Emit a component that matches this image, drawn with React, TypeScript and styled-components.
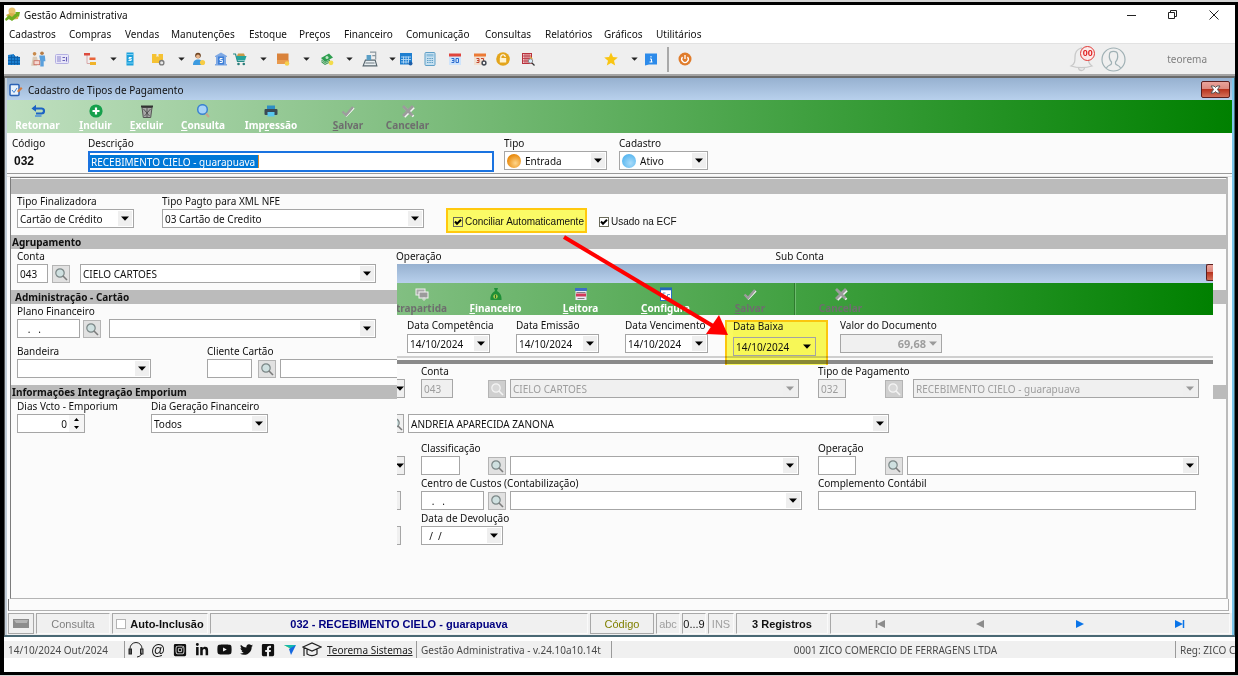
import React, { useId } from 'react';
import styled, { createGlobalStyle, css } from 'styled-components';
import { FaFacebookSquare, FaInstagramSquare, FaLinkedinIn, FaTwitter, FaYoutube } from 'react-icons/fa';

const Global = createGlobalStyle`
  * { box-sizing: border-box; }
  body { margin: 0; background: #d4d4d4; }
  body, button, input, select {
    font-family: 'Noto Sans', 'Open Sans', sans-serif;
    font-size: 10px;
    line-height: 14px;
    color: #111;
  }
  button { padding: 0; border: 0; background: none; }
`;

/* ---------- application frame ---------- */

const Frame = styled.div`
  display: flex;
  flex-direction: column;
  min-height: calc(100vh - 3px);
  margin: 2px 0 1px;
  border: 3px solid #000;
  border-left-width: 4px;
  background: #fff;
  overflow: hidden;
`;

const TitleBar = styled.header`
  display: flex;
  align-items: center;
  height: 20px;
  padding-left: 1px;
  gap: 4px;
`;

const WindowButtons = styled.div`
  display: flex;
  margin-left: auto;
  padding-right: 1px;
`;

const WindowButton = styled.button`
  display: grid;
  place-items: center;
  width: 41px;
  height: 18px;
`;

const MenuBar = styled.nav`
  display: flex;
  align-items: center;
  height: 18px;
  padding-left: 5px;
`;

const MenuItem = styled.button<{ $w: number }>`
  width: ${(p) => p.$w}px;
  text-align: left;
  white-space: nowrap;
`;

const ToolBar = styled.div`
  display: flex;
  align-items: center;
  height: 31px;
  border-top: 1px solid #e2e2e2;
  background: #efefef;
`;

const ToolButton = styled.button<{ $gap: number; $arrow?: boolean }>`
  display: grid;
  place-items: center;
  width: ${(p) => (p.$arrow ? 8 : 16)}px;
  height: 20px;
  margin-left: ${(p) => p.$gap}px;
`;

const ToolSeparator = styled.span`
  width: 2px;
  height: 25px;
  margin-left: 8px;
  background: #a9a9a9;
`;

const UserArea = styled.div`
  display: flex;
  align-items: center;
  gap: 6px;
  margin-left: auto;
  padding-right: 28px;
  color: #808080;
`;

const Bell = styled.button`
  position: relative;
  width: 26px;
  height: 28px;
`;

const BellBadge = styled.span`
  position: absolute;
  top: 1px;
  right: 0;
  width: 15px;
  height: 15px;
  border: 1px solid #e03a36;
  border-radius: 50%;
  background: #fbeaea;
  color: #e02020;
  font: bold 9px/13px 'Liberation Sans', sans-serif;
  text-align: center;
`;

const UserName = styled.span`
  margin-left: 35px;
  font-size: 10px;
`;

/* ---------- document window ---------- */

const Child = styled.section`
  display: flex;
  flex: 1;
  flex-direction: column;
  border: solid #4a6874;
  border-width: 2px 1px 2px;
  border-top-color: #6a6a6a;
  border-left-color: #555;
  background: #fbfbfb;
`;

const ToolBarEdge = styled.div`
  height: 2px;
  background: #a3a3a3;
`;

const ChildBody = styled.div`
  display: flex;
  flex: 1;
  flex-direction: column;
  border: solid #c4cfd9;
  border-width: 0 2px;
  border-right-color: #7cc6ea;
`;

const ChildTitle = styled.header`
  display: flex;
  align-items: center;
  height: 22px;
  padding: 1px 2px 0 2px;
  gap: 5px;
  background: linear-gradient(#97b1d0, #b8d0ec);
`;

const ChildTitleText = styled.h1`
  flex: 1;
  margin: 0;
  font-size: 10px;
  font-weight: 400;
`;

const CloseButton = styled.button`
  display: grid;
  place-items: center;
  width: 29px;
  height: 17px;
  border: 1px solid #5b1f1f;
  border-radius: 2px;
  background: linear-gradient(#e9a39b, #dd8a80 45%, #b8341f 50%, #d4705a);
`;

const CommandBar = styled.div`
  display: flex;
  height: 33px;
  padding: 4px 0 0 7px;
  gap: 18px;
  background: linear-gradient(90deg, #c0dfc0, #82bf82 32%, #40a040 65%, #008000);
`;

const Command = styled.button<{ $w: number; $off?: boolean; $lead?: number }>`
  display: flex;
  flex-direction: column;
  align-items: center;
  width: ${(p) => p.$w}px;
  margin-left: ${(p) => p.$lead ?? 0}px;
  white-space: nowrap;
  font-size: 10px;
  line-height: 14px;
  font-weight: 700;
  color: ${(p) => (p.$off ? '#6e6e6e' : '#fff')};
  svg { flex: none; }
`;

const HeaderForm = styled.div`
  display: flex;
  height: 40px;
  padding: 3px 0 0 5px;
`;

const DoubleRule = styled.div`
  height: 4px;
  border-top: 1px solid #9a9a9a;
  border-bottom: 1px solid #e4e4e4;
`;

const Panel = styled.div`
  position: relative;
  display: flex;
  flex: 1;
  flex-direction: column;
  margin: 0 4px 0 3px;
  border: 1px solid #7c7c7c;
  border-right: 2px solid #bbb;
  border-bottom-color: #b4b4b4;
`;

const SectionBar = styled.h2<{ $indent?: boolean }>`
  height: 14px;
  margin: 0;
  padding-left: ${(p) => (p.$indent ? 4 : 1)}px;
  background: #bbb;
  font-size: 10px;
  line-height: 14px;
  font-weight: 700;
`;

const TopBand = styled.div`
  height: 15px;
  margin-top: 1px;
  background: #bbb;
`;

const FormRow = styled.div<{ $h: number }>`
  display: flex;
  align-items: flex-start;
  height: ${(p) => p.$h}px;
  padding-left: 6px;
`;

/* ---------- fields ---------- */

const FieldBox = styled.div<{ $gap?: number; $w?: number }>`
  display: flex;
  flex-direction: column;
  flex: none;
  width: ${(p) => (p.$w ? p.$w + 'px' : 'auto')};
  margin-left: ${(p) => p.$gap ?? 0}px;
`;

const Label = styled.label`
  height: 15px;
  line-height: 14px;
  white-space: nowrap;
`;

const Controls = styled.div`
  display: flex;
  align-items: center;
`;

const boxed = css<{ $off?: boolean }>`
  height: 19px;
  border: 1px solid #a6a6a6;
  background: ${(p) => (p.$off ? '#f0f0f0' : '#fff')};
  color: ${(p) => (p.$off ? '#9d9d9d' : '#111')};
  border-radius: 0;
  outline: 0;
`;

const Input = styled.input<{ $w: number; $off?: boolean }>`
  ${boxed}
  flex: none;
  width: ${(p) => p.$w}px;
  padding: 0 2px;
`;

const FocusInput = styled.div`
  width: 406px;
  height: 21px;
  padding: 2px 0;
  border: 2px solid #1a73e0;
  background: #fff;
`;

const SelectedInput = styled.input`
  display: block;
  width: 169px;
  height: 13px;
  padding: 0 1px;
  border: 0;
  border-right: 1px solid #e08a2a;
  outline: 0;
  background: #0078d7;
  color: #fff;
`;

const Combo = styled.div<{ $w: number; $off?: boolean; $gap?: number }>`
  ${boxed}
  display: flex;
  align-items: center;
  flex: none;
  width: ${(p) => p.$w}px;
  margin-left: ${(p) => p.$gap ?? 0}px;
`;

const NativeSelect = styled.select<{ $off?: boolean; $bold?: boolean; $pad?: number }>`
  flex: 1;
  min-width: 0;
  height: 17px;
  padding: 0 0 0 ${(p) => p.$pad ?? 2}px;
  appearance: none;
  border: 0;
  border-radius: 0;
  outline: 0;
  background: transparent;
  color: ${(p) => (p.$off ? '#9d9d9d' : '#111')};
  opacity: 1;
  font-size: ${(p) => (p.$bold ? 11 : 10)}px;
  font-weight: ${(p) => (p.$bold ? 700 : 400)};
  text-align-last: ${(p) => (p.$bold ? 'right' : 'left')};
`;

const ArrowCell = styled.span`
  display: grid;
  place-items: center;
  flex: none;
  width: 14px;
  height: 15px;
  margin-right: 1px;
  background: #efefef;
`;

const Lookup = styled.button<{ $gap?: number; $off?: boolean }>`
  display: grid;
  place-items: center;
  flex: none;
  width: 18px;
  height: 18px;
  margin-left: ${(p) => p.$gap ?? 4}px;
  border: 1px solid #b4b4b4;
  background: ${(p) => (p.$off ? '#cfcfcf' : '#e1e1e1')};
`;

const CodeValue = styled.output`
  padding: 3px 0 0 2px;
  font: bold 12px/14px 'Liberation Sans', sans-serif;
`;

const Dot = styled.span<{ $c: string; $hi: string }>`
  flex: none;
  width: 14px;
  height: 14px;
  margin-left: 2px;
  border-radius: 50%;
  background: radial-gradient(circle at 60% 65%, ${(p) => p.$hi}, ${(p) => p.$c} 70%);
`;

const CheckLabel = styled.label<{ $hl?: boolean }>`
  display: flex;
  align-items: center;
  gap: 2px;
  height: 25px;
  margin-top: 14px;
  padding: 3px 2px 0 5px;
  border: 2px solid ${(p) => (p.$hl ? '#ffc90e' : 'transparent')};
  background: ${(p) => (p.$hl ? '#fbfb66' : 'transparent')};
  font: 10px/12px 'Liberation Sans', sans-serif;
  white-space: nowrap;
`;

const CheckCell = styled.span`
  display: grid;
  flex: none;
  > * { grid-area: 1 / 1; }
  svg { pointer-events: none; opacity: 0; }
  input:checked + svg { opacity: 1; }
`;

const CheckInput = styled.input<{ $hl?: boolean; $pale?: boolean }>`
  appearance: none;
  width: 10px;
  height: 10px;
  margin: 0;
  border: 1px solid ${(p) => (p.$pale ? '#b4b4b4' : '#6a6a5a')};
  background: ${(p) => (p.$hl ? '#fbfb66' : '#fff')};
`;

const Spinner = styled.div`
  ${boxed}
  display: flex;
  width: 68px;
`;

const SpinInput = styled.input`
  flex: 1;
  min-width: 0;
  padding: 0 2px 0 0;
  border: 0;
  outline: 0;
  background: transparent;
  text-align: right;
`;

const SpinKeys = styled.span`
  display: flex;
  flex-direction: column;
  width: 15px;
  background: #f5f5f5;
  button { display: grid; place-items: center; flex: 1; height: 8px; line-height: 0; }
`;

/* ---------- second window lying over the first ---------- */

const Overlay = styled.section`
  position: absolute;
  top: 86px;
  left: 386px;
  right: 13px;
  height: 290px;
  overflow: hidden;
  background: #fbfbfb;
`;

const OverlayTitle = styled.header`
  display: flex;
  justify-content: flex-end;
  height: 19px;
  background: linear-gradient(#97b1d0, #b8d0ec);
`;

const OverlayClose = styled.button`
  width: 7px;
  height: 17px;
  border: 1px solid #5b1f1f;
  border-right: 0;
  border-radius: 2px 0 0 2px;
  background: linear-gradient(#e9a39b, #dd8a80 45%, #b8341f 50%, #d4705a);
`;

const OverlayCommands = styled(CommandBar)`
  height: 32px;
  padding-left: 0;
  gap: 0;
  background: linear-gradient(90deg, #82bf82, #40a040 50%, #008000);
`;

const BarDivider = styled.span`
  width: 2px;
  height: 32px;
  margin: -4px 0 0 27px;
  background: #2f7a2f;
  border-right: 1px solid #6dbb6d;
`;

const DateRow = styled.div`
  display: flex;
  height: 49px;
  padding: 3px 0 0 10px;
  border-bottom: 4px solid #8a8a8a;
  box-shadow: inset 0 -2px 0 #fbfbfb, inset 0 -4px 0 #cfcfcf;
  label { height: 16px; }
`;

const Highlight = styled.div`
  flex: none;
  width: 103px;
  height: 45px;
  margin-left: 17px;
  margin-top: 2px;
  padding-left: 6px;
  border: 2px solid #ffc90e;
  border-bottom: 0;
  background: #fdfd60;
  mix-blend-mode: multiply;
  label { height: 15px; line-height: 8px; }
  select, div, span { background-color: #fbfb58; }
`;

const Grid = styled.div`
  display: grid;
  grid-template-columns: 24px 397px 1fr;
  grid-template-rows: 36px 35px 42px 35px 35px;
`;

const GridCell = styled.div<{ $from?: number; $end?: number }>`
  grid-column: ${(p) => p.$from ?? 'auto'} / ${(p) => p.$end ?? 'auto'};
  align-self: end;
  padding-bottom: 2px;
  min-width: 0;
`;

const Stub = styled.span<{ $w: number }>`
  display: flex;
  align-items: center;
  justify-content: flex-end;
  width: ${(p) => p.$w}px;
  height: 19px;
  border: 1px solid #a6a6a6;
  border-left: 0;
  background: #f0f0f0;
  overflow: hidden;
  svg { flex: none; }
`;

const Pointer = styled.svg`
  position: absolute;
  top: 57px;
  left: 550px;
  pointer-events: none;
`;

/* ---------- bottom bars ---------- */

const LowerStrip = styled.div`
  height: 12px;
  margin: 0 3px 2px 1px;
  border: 1px solid #b0b0b0;
  border-top: 0;
  border-left-color: #777;
`;

const RecordBar = styled.footer`
  display: flex;
  gap: 2px;
  height: 22px;
  padding: 0 2px 1px 1px;
  background: #f0f0f0;
  font-family: 'Liberation Sans', sans-serif;
`;

const RecordCell = styled.div<{ $w?: number; $c?: string; $b?: boolean; $raised?: boolean }>`
  display: flex;
  align-items: center;
  justify-content: center;
  flex: ${(p) => (p.$w ? `0 0 ${p.$w}px` : '1')};
  border: 1px solid #a8a8a8;
  border-right-color: ${(p) => (p.$raised ? '#a8a8a8' : '#fafafa')};
  border-bottom-color: ${(p) => (p.$raised ? '#a8a8a8' : '#fafafa')};
  color: ${(p) => p.$c ?? '#111'};
  font: ${(p) => (p.$b ? 'bold 11px' : '11px')}/14px 'Liberation Sans', sans-serif;
  white-space: nowrap;
`;

const NavButton = styled.button`
  display: grid;
  place-items: center;
  flex: 1;
`;

const AutoLabel = styled.label`
  display: flex;
  align-items: center;
  gap: 4px;
  font: bold 11px/14px 'Liberation Sans', sans-serif;
`;

const AppStatus = styled.footer`
  display: flex;
  align-items: stretch;
  height: 17px;
  margin: 4px 0 14px;
  background: #f0f0f0;
  color: #4a4a4a;
`;

const StatusCell = styled.div<{ $w?: number; $flush?: boolean }>`
  display: flex;
  align-items: center;
  justify-content: ${(p) => (p.$w ? 'flex-start' : 'center')};
  flex: ${(p) => (p.$w ? `0 0 ${p.$w}px` : '1')};
  padding-left: ${(p) => (p.$flush ? 0 : 4)}px;
  border-left: 1px solid #9a9a9a;
  white-space: nowrap;
  overflow: hidden;
  &:first-child { border-left: 0; }
`;

const SocialLink = styled.a`
  display: grid;
  place-items: center;
  width: 22px;
  flex: none;
  color: #111;
  font: 14px/16px 'Liberation Sans', sans-serif;
  text-decoration: none;
`;

const SiteLink = styled.a`
  margin-left: 4px;
  color: #222;
`;

/* ---------- icons ---------- */

const Down = ({ c = '#000', w = 8 }: { c?: string; w?: number }) => (
  <svg width={w} height={w === 8 ? 5 : 4} viewBox="0 0 8 5" aria-hidden="true"><path d="M0 .5h8L4 4.8z" fill={c} /></svg>
);

const Lens = ({ off }: { off?: boolean }) => (
  <svg width="14" height="14" viewBox="0 0 14 14" fill="none" aria-hidden="true">
    <circle cx="6" cy="6" r="4.2" fill={off ? '#d8d8d8' : '#cfe0e0'} stroke={off ? '#f4f4f4' : '#7b8787'} strokeWidth="1.2" />
    <path d="M9 9l4 4" stroke={off ? '#f4f4f4' : '#7b7b7b'} strokeWidth="1.6" />
  </svg>
);

const Svg = ({ children, s = 14 }: { children: React.ReactNode; s?: number }) => (
  <svg width={s} height={s} viewBox="0 0 14 14" fill="none" aria-hidden="true">{children}</svg>
);

const icons: Record<string, React.ReactNode> = {
  building: <Svg><path d="M1 3l6-1v2l6 1v8H1z" fill="#1b7fd0" /><path d="M1 5.500h12M1 8.500h12M1 11.500h12M4.500 3v10M7.500 3v10M10.500 4v9" stroke="#0b5ba3" strokeWidth=".8" /></Svg>,
  people: <Svg s={16}><circle cx="4" cy="2.500" r="1.600" fill="#c98a4b" /><circle cx="10.500" cy="2" r="1.600" fill="#b57b46" /><path d="M1 13l1.500-8h3.500l1 4-1 4z" fill="#d9cbb8" /><path d="M8 4h5l.5 5h-1.500v4.500H9V9z" fill="#5aa0dc" /><rect x="3.500" y="8.500" width="5" height="3.500" fill="#f6d8d2" stroke="#c9685c" strokeWidth=".7" /></Svg>,
  card: <Svg><rect x=".5" y="2.500" width="13" height="9" rx="1" fill="#e8e6f8" stroke="#b4b0e2" /><path d="M2 5h4M2 7h4M2 9h4" stroke="#8a84cc" strokeWidth="1" /><path d="M7.500 5.500h2.500M7.500 8.500h2.500M11.500 5v4.500" stroke="#6a62b8" strokeWidth="1.100" /></Svg>,
  tree: <Svg><path d="M4 3v8.500h4" stroke="#d8a8a8" /><rect x="1" y="1" width="6" height="2.500" fill="#dd4b3e" /><rect x="6.500" y="5.500" width="6" height="2.500" fill="#e8643a" /><rect x="7" y="10" width="6" height="3" fill="#f0b32a" /></Svg>,
  phone: <Svg><rect x="3.500" y=".5" width="7" height="13" fill="#1da1dc" /><path d="M3.500 2.500h7M3.500 11h7" stroke="#7cd0f2" /><path d="M8.700 5.500H6v1.400h2.200v1.500H5.500" stroke="#fff" /></Svg>,
  boxGear: <Svg><path d="M1 2h4.500v3l1-.8 1 .8V2H12v9H1z" fill="#f5c233" /><circle cx="10.700" cy="10.700" r="2.200" fill="#e6e6e6" stroke="#7b7b7b" strokeWidth="1.300" /></Svg>,
  userCoin: <Svg><circle cx="6" cy="3.500" r="2.800" fill="#6f4522" /><circle cx="6" cy="4.600" r="2" fill="#e8b48a" /><path d="M1 13c0-4 2-5.500 5-5.500s4.500 1.500 5 5.500z" fill="#3d9be0" /><circle cx="10.500" cy="10.500" r="2.600" fill="#f7cc45" /></Svg>,
  bank: <Svg><path d="M1 4l6-3.500L13 4v1H1zM1 12h12v1.500H1zM2 5h2v7H2zM10 5h2v7h-2z" fill="#7fa9e4" /><rect x="4" y="4.500" width="6" height="8" fill="#3d7fd8" /><path d="M8.500 6.500h-2.500V8.300h2.300V10.500H5.700" stroke="#fff" /></Svg>,
  cart: <Svg><path d="M0 2h2.500l2 7.500h7" stroke="#2a8a86" strokeWidth="1.200" /><path d="M3 4h10.500l-1.500 4.500H4.200z" fill="#25a39c" /><path d="M5 1.500h6l1 2.500H4z" fill="#c49a4a" /><circle cx="5.500" cy="12" r="1.300" fill="#2a7d7a" /><circle cx="10.800" cy="12" r="1.300" fill="#2a7d7a" /></Svg>,
  box: <Svg><path d="M1 1.500h11.500V12H1z" fill="#d9823b" /><path d="M1 8h11.500v4H1z" fill="#e99a4e" /><circle cx="11" cy="11.500" r="2.300" fill="#f6d04c" /></Svg>,
  cash: <Svg><path d="M1 6l8-4.500 4 4L5 10z" fill="#2e9e4f" /><path d="M1.500 7.500v3L5 13l5-2.500v-3L5 10z" fill="#3f9a58" /><path d="M2 9l3 2.500L9 9.500" stroke="#cfe8d5" strokeWidth=".7" /><circle cx="7" cy="5.500" r="1.500" fill="#bfe6c8" /><circle cx="11" cy="10.800" r="2.400" fill="#f3dc4c" /></Svg>,
  register: <Svg s={16}><path d="M3 8h8.500l1.500 5H1z" fill="#e9eff2" stroke="#57656d" /><path d="M4 8V3.500h4V8" fill="#5a9fc6" /><path d="M7 1h5v2.500M9 4h3v3.500" stroke="#8b979e" /><path d="M3 10.500h8" stroke="#7d8a91" /></Svg>,
  sheet: <Svg><rect x="1" y="1" width="12" height="11.500" fill="#1f7fd0" /><path d="M2 5h10M2 7.500h10M2 10h8M4.500 4.500v7M7 4.500v7M9.500 4.500v7" stroke="#b4d9f6" strokeWidth=".9" /><circle cx="11.500" cy="11.500" r="2" fill="#1f5fa8" /></Svg>,
  calc: <Svg><rect x="2" y=".5" width="10" height="13" rx="1" fill="#c6e0f0" stroke="#5f9fc6" /><rect x="3.500" y="2" width="7" height="2.500" fill="#8fc0de" /><path d="M4 6.500h6M4 8.500h6M4 10.500h6" stroke="#5f9fc6" strokeDasharray="1.500 .8" strokeWidth="1.200" /></Svg>,
  calendar: <Svg><rect x="1" y="3" width="12" height="10" fill="#cfe4fb" /><path d="M1 1.500h12v3H1z" fill="#e0453d" /><path d="M3.500 6.500h2.500v4H3.500M4 8.500h2M8 6.500h2.500v4H8z" stroke="#2d6cd0" /></Svg>,
  calendarGear: <Svg><rect x="1" y="3" width="11" height="10" fill="#f0e0d2" /><path d="M1 1.500h12v3H1z" fill="#ec7a35" /><path d="M3.500 6.500h2.500v4H3.500M4 8.500h2M8 6.500h2.500v3" stroke="#c4452d" /><circle cx="11" cy="11" r="1.900" fill="#fff" stroke="#454b55" strokeWidth="1.500" /></Svg>,
  lock: <Svg><circle cx="7" cy="7" r="6.800" fill="#e3a51c" /><path d="M4.800 6.500V5a2.200 2.200 0 014.400 0" stroke="#fff" strokeWidth="1.100" /><rect x="3.800" y="6" width="6.400" height="4.500" fill="#fff3cf" /></Svg>,
  gridLens: <Svg><rect x="1.500" y="1.500" width="9" height="10" fill="#f0c4c8" stroke="#b8323d" /><path d="M1.500 4h9M1.500 6.500h9M1.500 9h9M4 1.500v10M6 1.500v10M8 1.500v10" stroke="#b8323d" strokeWidth=".8" /><path d="M9 4l3 3-3 1z" fill="#f0b040" /><circle cx="9.500" cy="9" r="2.200" fill="#d8ecfa" stroke="#8a8a8a" /><path d="M11 11l2.500 2.500" stroke="#333" strokeWidth="1.200" /></Svg>,
  star: <Svg><path d="M7 .5l2 4.500 4.800.4L10 8.700l1.200 4.800L7 11l-4.200 2.500L4 8.700.2 5.400 5 5z" fill="#f9c513" /></Svg>,
  info: <Svg><path d="M1 1.500h12v11H5L1 13.500z" fill="#2d8bea" /><path d="M7 4v1.500M6 7h1.500v3M5.500 10h3" stroke="#fff" strokeWidth="1" /></Svg>,
  power: <Svg><circle cx="7" cy="7" r="6.500" fill="#e07c2c" /><path d="M4.500 5a3.300 3.300 0 105 0M7 3v4" stroke="#fff" strokeWidth="1.300" /></Svg>,
  back: <Svg><path d="M2 4.500h8.500a2.200 2.200 0 010 5H5" stroke="#1c63c4" strokeWidth="2.200" /><path d="M5 .8v7L.5 4.500z" fill="#1c63c4" /><path d="M4 12h6.500" stroke="#4a8ed8" strokeWidth="1.500" /></Svg>,
  plus: <Svg><circle cx="7" cy="7" r="6.600" fill="#16a04c" /><path d="M7 3.500v7M3.500 7h7" stroke="#fff" strokeWidth="2.200" /></Svg>,
  trash: <Svg><path d="M2 3.500h10l-1.300 10H3.300z" fill="#a7a7a7" stroke="#555" /><path d="M1 2.500h12" stroke="#333" strokeWidth="2" /><path d="M3.500 5l6 7M10.500 5l-6 7M7 4v9" stroke="#444" strokeWidth=".8" /></Svg>,
  search: <Svg><circle cx="6.500" cy="5.500" r="4.800" fill="#a7d3f7" stroke="#3b82d0" strokeWidth="1.500" /><path d="M10 9.500L13 13" stroke="#c8a38a" strokeWidth="2" /></Svg>,
  print: <Svg><path d="M3 1.500h8v4H3z" fill="#2d8ec4" /><rect x=".5" y="5" width="13" height="6" rx="1" fill="#3a4a55" /><path d="M3.500 8h7v4.500h-7z" fill="#59c7ee" /></Svg>,
  check: <Svg><path d="M2.500 8.500l3 3.500L13 4" stroke="#fff" strokeWidth="1.500" /><path d="M1.500 7.500l3.500 3.500L12 3" stroke="#9c9c9c" strokeWidth="2.400" /></Svg>,
  cross: <Svg><path d="M3.500 3.500l9 9M13 3.500L3.500 13" stroke="#f4f4f4" strokeWidth="2.200" /><path d="M2 2l9.500 9.500M12 2L2 12" stroke="#9c9c9c" strokeWidth="2.800" /></Svg>,
  cards: <Svg><rect x="1" y="2" width="9" height="6" fill="#a9a9a9" stroke="#eee" /><rect x="4" y="5" width="9" height="6" fill="#9b9b9b" stroke="#f4f4f4" /><path d="M9 10v4M7 12h4" stroke="#ddd" /></Svg>,
  bag: <Svg><path d="M5 1h4l-1 3c3 1.500 5 5 4.500 9h-11C1 9 3 5.500 6 4z" fill="#1f8f37" /><circle cx="6.500" cy="9.500" r="2.200" fill="#a8c94c" /><path d="M6.500 7.800v3.400" stroke="#1f6f2f" /></Svg>,
  reader: <Svg><rect x="1" y="1" width="12" height="3" fill="#3d6fc4" /><rect x="1.500" y="4" width="11" height="9" fill="#eceaf4" /><path d="M2 8h10" stroke="#d23a5a" strokeWidth="3" /><path d="M2.500 5.500h9M3.500 11.500h7" stroke="#666" strokeWidth=".8" /></Svg>,
  config: <Svg><rect x="1.500" y="1" width="11" height="12.500" fill="#fff" stroke="#2a6fc0" /><path d="M1 2h12" stroke="#2468b8" strokeWidth="2.500" /><path d="M6.500 6H4v5h2.500M11 7.500H8.500V11H11" stroke="#5e9ccc" /></Svg>,
};

/* ---------- small composites ---------- */

const Check = ({ hl, pale, checked }: { hl?: boolean; pale?: boolean; checked?: boolean }) => (
  <CheckCell>
    <CheckInput type="checkbox" $hl={hl} $pale={pale} defaultChecked={checked} />
    <svg width="10" height="10" viewBox="0 0 10 10" fill="none" aria-hidden="true"><path d="M2 4.500l2 2.200L8 2.800" stroke="#000" strokeWidth="2" /></svg>
  </CheckCell>
);

type SelectProps = { label?: string; id?: string; value?: string; w: number; gap?: number; off?: boolean; bold?: boolean; dot?: [string, string] };

const Select = ({ label, id, value = '', w, gap, off, bold, dot }: SelectProps) => (
  <Combo $w={w} $gap={gap} $off={off}>
    {dot && <Dot $c={dot[0]} $hi={dot[1]} />}
    <NativeSelect id={id} aria-label={label} $off={off} $bold={bold} $pad={dot ? 4 : 2} disabled={off} defaultValue={value}>
      <option value={value}>{value}</option>
    </NativeSelect>
    <ArrowCell><Down c={off ? '#999' : '#000'} /></ArrowCell>
  </Combo>
);

const SelectField = ({ label, gap, fieldW, ...rest }: SelectProps & { label: string; fieldW?: number }) => {
  const id = useId();
  return (
    <FieldBox $gap={gap} $w={fieldW}>
      <Label htmlFor={id}>{label}</Label>
      <Select id={id} {...rest} />
    </FieldBox>
  );
};

type LookupProps = { label: string; code?: string; codeW: number; btnGap?: number; comboGap?: number; comboW: number; value?: string; off?: boolean; gap?: number };

const LookupField = ({ label, code = '', codeW, btnGap = 4, comboGap = 4, comboW, value, off, gap }: LookupProps) => {
  const id = useId();
  return (
    <FieldBox $gap={gap}>
      <Label htmlFor={id}>{label}</Label>
      <Controls>
        <Input id={id} $w={codeW} $off={off} disabled={off} defaultValue={code} />
        <Lookup type="button" aria-label={`Pesquisar ${label}`} $gap={btnGap} $off={off}><Lens off={off} /></Lookup>
        <Select label={label} w={comboW} gap={comboGap} off={off} value={value} />
      </Controls>
    </FieldBox>
  );
};

const Cmd = ({ text, hot, icon, ...rest }: { text: string; hot?: number; icon: string; $w: number; $off?: boolean; $lead?: number }) => (
  <Command type="button" {...rest}>
    {icons[icon]}
    <span>{hot === undefined ? text : <>{text.slice(0, hot)}<u>{text[hot]}</u>{text.slice(hot + 1)}</>}</span>
  </Command>
);

const menus: [string, number][] = [
  ['Cadastros', 60], ['Compras', 56], ['Vendas', 46], ['Manutenções', 78], ['Estoque', 50], ['Preços', 45],
  ['Financeiro', 62], ['Comunicação', 79], ['Consultas', 60], ['Relatórios', 59], ['Gráficos', 52], ['Utilitários', 60],
];

const tools: [string, number][] = [
  ['building', 2], ['people', 8], ['card', 8], ['tree', 12], ['', 11], ['phone', 5], ['boxGear', 12], ['', 11],
  ['userCoin', 6], ['bank', 6], ['cart', 3], ['', 11], ['box', 8], ['', 11], ['cash', 9], ['', 10], ['register', 9],
  ['', 10], ['sheet', 2], ['calc', 8], ['calendar', 9], ['calendarGear', 9], ['lock', 7], ['gridLens', 9],
  ['star', 67], ['', 11], ['info', 5],
];

const Nav = ({ dir, end, c }: { dir: 1 | -1; end?: boolean; c: string }) => (
  <svg width="12" height="10" viewBox="-6 -5 12 10" aria-hidden="true">
    <g transform={`scale(${dir} 1)`}>
      <path d="M-4-4L4 0l-8 4z" fill={c} />
      {end && <path d="M4.500-4v8" stroke={c} strokeWidth="1.500" />}
    </g>
  </svg>
);

export default function App() {
  return (
    <>
      <Global />
      <Frame>
        <TitleBar>
          <svg width="15" height="16" viewBox="0 0 15 16" aria-hidden="true">
            <circle cx="7" cy="4" r="3.500" fill="#e9c46c" /><path d="M1 8l4-2 9 1-1 5-8 1z" fill="#d9b04e" />
            <path d="M0 12l4-4 3 2 4-4-1-1 5 0-1 5-1-1-6 5-3-2-3 2z" fill="#6fae1f" />
          </svg>
          <span>Gestão Administrativa</span>
          <WindowButtons>
            <WindowButton type="button" aria-label="Minimizar"><svg width="10" height="10"><path d="M0 5.500h9" stroke="#222" /></svg></WindowButton>
            <WindowButton type="button" aria-label="Restaurar"><svg width="10" height="10" fill="none" stroke="#222"><path d="M.5 2.500h6v6h-6zM2.500 2V.5h6v6H7" /></svg></WindowButton>
            <WindowButton type="button" aria-label="Fechar"><svg width="10" height="10" stroke="#222"><path d="M.5.500l9 9M9.500.500l-9 9" /></svg></WindowButton>
          </WindowButtons>
        </TitleBar>
        <MenuBar>
          {menus.map(([t, w]) => <MenuItem type="button" key={t} $w={w}>{t}</MenuItem>)}
        </MenuBar>
        <ToolBar>
          {tools.map(([name, gap], i) => (
            <ToolButton type="button" key={i} $gap={gap} $arrow={!name} aria-label={name || 'opções'}>
              {name ? icons[name] : <Down c="#222" w={7} />}
            </ToolButton>
          ))}
          <ToolSeparator />
          <ToolButton type="button" $gap={8} aria-label="Sair">{icons.power}</ToolButton>
          <UserArea>
            <Bell type="button" aria-label="Notificações">
              <svg width="26" height="28" viewBox="0 0 26 28" fill="none" stroke="#c9c9c9" strokeWidth="1.300" aria-hidden="true">
                <path d="M2 21c4-2 4-5 4-9 0-5 3-8 6-9 4 1 7 4 7 9s1 7 4 9c-6 2-15 2-21 0z" /><path d="M9.500 22.500a3 3 0 006 0" />
              </svg>
              <BellBadge>00</BellBadge>
            </Bell>
            <svg width="25" height="25" viewBox="0 0 25 25" fill="none" stroke="#9fb0b4" strokeWidth="1.200" aria-hidden="true">
              <circle cx="12.500" cy="12.500" r="11.500" />
              <path d="M5.500 21c1-3 4.500-2.500 5-4.500v-1.500c-2-2-2.500-5-2-8 .5-3.500 7.500-3.500 8 0 .5 3 0 6-2 8v1.500c.5 2 4 1.500 5 4.500" />
            </svg>
            <UserName>teorema</UserName>
          </UserArea>
        </ToolBar>
        <ToolBarEdge />

        <Child>
          <ChildBody>
            <ChildTitle>
              <svg width="14" height="14" viewBox="0 0 14 14" aria-hidden="true">
                <rect x="1" y="1.500" width="9" height="11" rx="1" fill="#e9f2fb" stroke="#2b62b5" strokeWidth="1.500" />
                <path d="M3 7l2 2.500L8 5" fill="none" stroke="#3d7fd0" /><path d="M8 8l4-4 1.500 1.500-4 4z" fill="#d57a3c" />
              </svg>
              <ChildTitleText>Cadastro de Tipos de Pagamento</ChildTitleText>
              <CloseButton type="button" aria-label="Fechar cadastro">
                <svg width="11" height="9" viewBox="0 0 11 9" stroke="#555" fill="#fff"><path d="M1 1h3l1.500 1.500L7 1h3L7.500 4.500 10 8H7L5.500 6.500 4 8H1l2.500-3.500z" /></svg>
              </CloseButton>
            </ChildTitle>
            <CommandBar>
              <Cmd text="Retornar" icon="back" $w={47} />
              <Cmd text="Incluir" hot={0} icon="plus" $w={33} />
              <Cmd text="Excluir" hot={0} icon="trash" $w={33} />
              <Cmd text="Consulta" hot={0} icon="search" $w={44} />
              <Cmd text="Impressão" hot={3} icon="print" $w={56} />
              <Cmd text="Salvar" hot={0} icon="check" $w={34} $lead={14} $off />
              <Cmd text="Cancelar" icon="cross" $w={45} $lead={2} $off />
            </CommandBar>
            <HeaderForm>
              <FieldBox $w={76}>
                <Label htmlFor="codigo">Código</Label>
                <CodeValue id="codigo">032</CodeValue>
              </FieldBox>
              <FieldBox $w={416}>
                <Label htmlFor="descricao">Descrição</Label>
                <FocusInput><SelectedInput id="descricao" defaultValue="RECEBIMENTO CIELO - guarapuava" /></FocusInput>
              </FieldBox>
              <SelectField label="Tipo" value="Entrada" w={103} dot={['#e8890c', '#ffd68a']} />
              <SelectField label="Cadastro" value="Ativo" w={89} gap={12} dot={['#5cb8f0', '#a9dcfa']} />
            </HeaderForm>
            <DoubleRule />

            <Panel>
              <TopBand />
              <FormRow $h={41}>
                <SelectField label="Tipo Finalizadora" value="Cartão de Crédito" w={117} />
                <SelectField label="Tipo Pagto para XML NFE" value="03 Cartão de Credito" w={262} gap={28} />
                <FieldBox $gap={22} $w={141}>
                  <CheckLabel $hl><Check hl checked />Conciliar Automaticamente</CheckLabel>
                </FieldBox>
                <FieldBox $gap={5}>
                  <CheckLabel><Check checked />Usado na ECF</CheckLabel>
                </FieldBox>
              </FormRow>
              <SectionBar>Agrupamento</SectionBar>
              <FormRow $h={41}>
                <LookupField label="Conta" code="043" codeW={31} comboGap={10} comboW={296} value="CIELO CARTOES" />
                <FieldBox $gap={20}><span>Operação</span></FieldBox>
                <FieldBox $gap={334}><span>Sub Conta</span></FieldBox>
              </FormRow>
              <SectionBar $indent>Administração - Cartão</SectionBar>
              <FormRow $h={40}>
                <LookupField label="Plano Financeiro" code="   .   ." codeW={63} btnGap={3} comboGap={8} comboW={267} />
              </FormRow>
              <FormRow $h={41}>
                <SelectField label="Bandeira" w={134} />
                <LookupField label="Cliente Cartão" codeW={45} btnGap={6} comboW={150} gap={56} />
              </FormRow>
              <SectionBar>Informações Integração Emporium</SectionBar>
              <FormRow $h={40}>
                <FieldBox $w={134}>
                  <Label htmlFor="dias">Dias Vcto - Emporium</Label>
                  <Spinner>
                    <SpinInput id="dias" defaultValue="0" />
                    <SpinKeys>
                      <button type="button" aria-label="Aumentar"><svg width="5" height="3"><path d="M0 3h5L2.500 0z" /></svg></button>
                      <button type="button" aria-label="Diminuir"><svg width="5" height="3"><path d="M0 0h5L2.500 3z" /></svg></button>
                    </SpinKeys>
                  </Spinner>
                </FieldBox>
                <SelectField label="Dia Geração Financeiro" value="Todos" w={117} />
              </FormRow>

              <Overlay>
                <OverlayTitle><OverlayClose type="button" aria-label="Fechar documento" /></OverlayTitle>
                <OverlayCommands>
                  <Cmd text="trapartida" icon="cards" $w={49} $off />
                  <Cmd text="Financeiro" hot={0} icon="bag" $w={53} $lead={23} />
                  <Cmd text="Leitora" hot={0} icon="reader" $w={37} $lead={40} />
                  <Cmd text="Configura" hot={0} icon="config" $w={49} $lead={42} />
                  <Cmd text="Salvar" hot={0} icon="check" $w={34} $lead={43} $off />
                  <BarDivider />
                  <Cmd text="Cancelar" icon="cross" $w={45} $lead={22} $off />
                </OverlayCommands>
                <DateRow>
                  <SelectField label="Data Competência" value="14/10/2024" w={83} fieldW={109} />
                  <SelectField label="Data Emissão" value="14/10/2024" w={83} fieldW={109} />
                  <SelectField label="Data Vencimento" value="14/10/2024" w={83} fieldW={83} />
                  <Highlight><SelectField label="Data Baixa" value="14/10/2024" w={83} /></Highlight>
                  <SelectField label="Valor do Documento" value="69,68" w={102} gap={12} off bold />
                </DateRow>
                <Grid>
                  <GridCell><Stub $w={8}><Down /></Stub></GridCell>
                  <GridCell><LookupField label="Conta" code="043" codeW={32} btnGap={35} comboW={289} value="CIELO CARTOES" off /></GridCell>
                  <GridCell><LookupField label="Tipo de Pagamento" code="032" codeW={28} btnGap={39} comboGap={10} comboW={286} value="RECEBIMENTO CIELO - guarapuava" off /></GridCell>

                  <GridCell $from={1} $end={4}>
                    <Controls><Stub $w={7}><Lens /></Stub><Select label="Cliente" value="ANDREIA APARECIDA ZANONA" w={481} gap={4} /></Controls>
                  </GridCell>

                  <GridCell><Stub $w={8}><Down /></Stub></GridCell>
                  <GridCell><LookupField label="Classificação" codeW={39} btnGap={28} comboW={289} /></GridCell>
                  <GridCell><LookupField label="Operação" codeW={38} btnGap={29} comboW={292} /></GridCell>

                  <GridCell><Stub $w={4} /></GridCell>
                  <GridCell><LookupField label="Centro de Custos (Contabilização)" code="   .   ." codeW={63} comboW={292} /></GridCell>
                  <GridCell>
                    <FieldBox>
                      <Label htmlFor="complemento">Complemento Contábil</Label>
                      <Input id="complemento" $w={378} />
                    </FieldBox>
                  </GridCell>

                  <GridCell><Stub $w={4} /></GridCell>
                  <GridCell><SelectField label="Data de Devolução" value={'\u00a0\u00a0/\u00a0\u00a0/'} w={82} /></GridCell>
                </Grid>
              </Overlay>

              <Pointer width="170" height="105" viewBox="0 0 170 105" aria-hidden="true">
                <path d="M3 2L152 91" stroke="#f00" strokeWidth="4" />
                <path d="M167 100L145 99l13-19z" fill="#f00" />
              </Pointer>
            </Panel>
            <LowerStrip />
            <RecordBar>
              <RecordCell $w={26} $raised>
                <svg width="16" height="9" aria-hidden="true"><rect width="16" height="9" fill="#8c8c8c" /><path d="M1 1h14l-1 3H3z" fill="#b4b4b4" /></svg>
              </RecordCell>
              <RecordCell $w={74} $c="#808080">Consulta</RecordCell>
              <RecordCell $w={96}>
                <AutoLabel><Check pale />Auto-Inclusão</AutoLabel>
              </RecordCell>
              <RecordCell $b $c="#000080">032 - RECEBIMENTO CIELO - guarapuava</RecordCell>
              <RecordCell $w={64} $c="#808000" $raised>Código</RecordCell>
              <RecordCell $w={24} $c="#a0a0a0">abc</RecordCell>
              <RecordCell $w={24}>0...9</RecordCell>
              <RecordCell $w={26} $c="#a0a0a0">INS</RecordCell>
              <RecordCell $w={92} $b>3 Registros</RecordCell>
              <RecordCell $w={400}>
                <NavButton type="button" aria-label="Primeiro"><Nav dir={-1} end c="#8c8c8c" /></NavButton>
                <NavButton type="button" aria-label="Anterior"><Nav dir={-1} c="#8c8c8c" /></NavButton>
                <NavButton type="button" aria-label="Próximo"><Nav dir={1} c="#0a74e8" /></NavButton>
                <NavButton type="button" aria-label="Último"><Nav dir={1} end c="#0a74e8" /></NavButton>
              </RecordCell>
            </RecordBar>
          </ChildBody>
        </Child>

        <AppStatus>
          <StatusCell $w={120}>14/10/2024 Out/2024</StatusCell>
          <StatusCell $w={292} $flush>
            <SocialLink href="#suporte" aria-label="Suporte">
              <svg width="16" height="16" viewBox="0 0 16 16" fill="none" stroke="#222" aria-hidden="true">
                <path d="M2 9V6.500a6 6 0 0112 0V10c0 3-2 4.500-5 5" /><rect x="1" y="7" width="2.500" height="5" fill="#555" /><rect x="12.500" y="7" width="2.500" height="5" />
              </svg>
            </SocialLink>
            <SocialLink href="#email">@</SocialLink>
            <SocialLink href="#instagram" aria-label="Instagram"><FaInstagramSquare size={14} /></SocialLink>
            <SocialLink href="#linkedin" aria-label="LinkedIn"><FaLinkedinIn size={14} /></SocialLink>
            <SocialLink href="#youtube" aria-label="YouTube"><FaYoutube size={15} /></SocialLink>
            <SocialLink href="#twitter" aria-label="Twitter"><FaTwitter size={13} /></SocialLink>
            <SocialLink href="#facebook" aria-label="Facebook"><FaFacebookSquare size={14} /></SocialLink>
            <SocialLink href="#teorema" aria-label="Teorema">
              <svg width="12" height="12" viewBox="0 0 12 12" aria-hidden="true"><path d="M0 1l7 1 0 3z" fill="#5fd23c" /><path d="M0 1l12 0-4 4z" fill="#14b8b0" /><path d="M12 1L7 11 5 5z" fill="#1668e0" /></svg>
            </SocialLink>
            <SocialLink href="#cursos" aria-label="Cursos">
              <svg width="20" height="15" viewBox="0 0 20 15" fill="none" stroke="#222" aria-hidden="true"><path d="M1 5l9-4 9 4-9 4zM5 7.500V12c3 2 7 2 10 0V7.500M2 5.500V14" strokeWidth="1.200" /></svg>
            </SocialLink>
            <SiteLink href="#site">Teorema Sistemas</SiteLink>
          </StatusCell>
          <StatusCell $w={195}>Gestão Administrativa - v.24.10a10.14t</StatusCell>
          <StatusCell>0001 ZICO COMERCIO DE FERRAGENS LTDA</StatusCell>
          <StatusCell $w={60}>Reg: ZICO C</StatusCell>
        </AppStatus>
      </Frame>
    </>
  );
}
